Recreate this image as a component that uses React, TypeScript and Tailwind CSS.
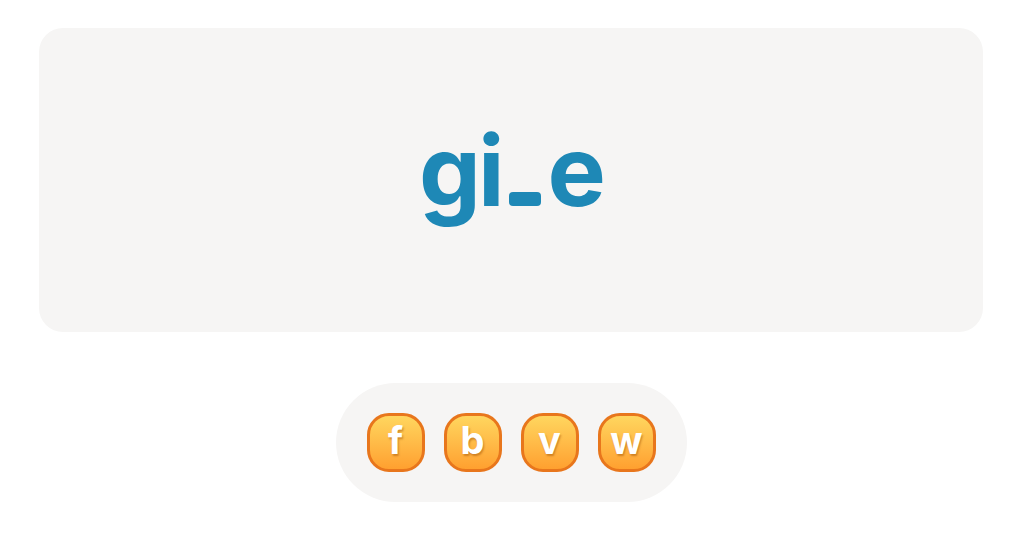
import React from "react";

const letters = ["f", "b", "v", "w"];

function LetterKey({ letter }: { letter: string }) {
    return (
        <button className="flex h-[59px] w-[58px] items-center justify-center rounded-[22px] border-[3px] border-[#e8761c] bg-gradient-to-b from-[#ffd65e] to-[#ffa02f] text-[38px] leading-none font-bold text-white [text-shadow:1px_2px_2px_rgba(150,70,0,0.45)]">
            <span className="-mt-[6px]">{letter}</span>
        </button>
    );
}

export default function App() {
    return (
        <div className="flex min-h-screen flex-col items-center bg-white pt-[28px] font-['Inter',_'Noto_Sans',_sans-serif]">
            {/* Word card */}
            <div className="flex h-[304px] w-[944px] items-center justify-center rounded-[24px] bg-[#f6f5f4] pb-[18px]">
                <div className="flex items-baseline text-[98px] leading-none font-bold tracking-[-3px] text-[#1e88b6]">
                    <span>gi</span>
                    <span className="mx-[7px] inline-block h-[14px] w-[32px] rounded-[4px] bg-[#1e88b6]" />
                    <span>e</span>
                </div>
            </div>

            {/* Letter choices */}
            <div className="mt-[51px] flex items-center gap-[19px] rounded-[60px] bg-[#f6f5f4] px-[31px] py-[30px]">
                {letters.map((l) => (
                    <LetterKey key={l} letter={l} />
                ))}
            </div>
        </div>
    );
}
